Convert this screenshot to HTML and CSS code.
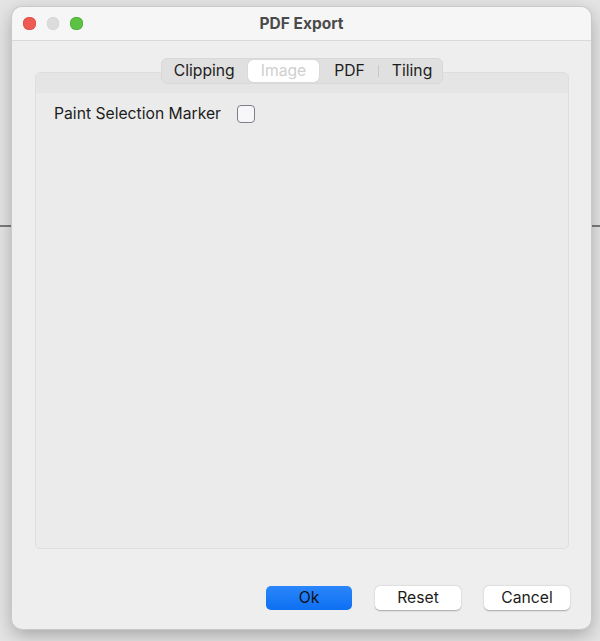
FILE: index.html
```html
<html>
<head>
<meta http-equiv="Content-Type" content="text/html; charset=UTF-8">
<title>PDF Export</title>
<link rel="stylesheet" href="styles.css">
</head>
<body>
<div class="window">
	<div class="titlebar">
		<div class="lights">
			<span class="light red"></span>
			<span class="light gray"></span>
			<span class="light green"></span>
		</div>
		<div class="title">PDF Export</div>
	</div>
	<div class="content">
		<div class="tabs">
			<span class="tab">Clipping</span>
			<span class="tab selected">Image</span>
			<span class="tab sep">PDF</span>
			<span class="tab">Tiling</span>
		</div>
		<div class="panel">
			<div class="panel_head"></div>
			<div class="row">
				<span class="label">Paint Selection Marker</span>
				<span class="check"></span>
			</div>
		</div>
		<div class="buttons">
			<span class="button default">Ok</span>
			<span class="button">Reset</span>
			<span class="button">Cancel</span>
		</div>
	</div>
</div>
</body>
</html>
```

FILE: styles.css
```css
body{
	margin: 0;
	height: 641px;
	overflow: hidden;
	font-family: Inter, "Noto Sans", "Liberation Sans", sans-serif;
	color: #262626;
	background:
		linear-gradient(to bottom, transparent 225px, #7a7a7a 225px, #7a7a7a 227px, transparent 227px),
		#e4e4e4;
}

div.window{
	margin: 7px 9px 0 12px;
	width: 579px;
	height: 622px;
	border-radius: 10px;
	background: #eeeeee;
	box-shadow: 0 0 0 1px #c9c9c9, 0 6px 18px rgba(0,0,0,0.28);
	overflow: hidden;
	display: flex;
	flex-direction: column;
}

div.titlebar{
	height: 33px;
	background: #f6f6f6;
	border-bottom: 1px solid #d9d9d9;
	display: flex;
	align-items: center;
	position: relative;
}
div.lights{
	display: flex;
	gap: 11px;
	padding-left: 11px;
}
span.light{
	width: 12.5px;
	height: 12.5px;
	border-radius: 50%;
}
span.red{background: #ee5a52; box-shadow: inset 0 0 0 0.5px #d8443c}
span.gray{background: #dcdcdc; box-shadow: inset 0 0 0 0.5px #cfcfcf}
span.green{background: #5cc243; box-shadow: inset 0 0 0 0.5px #48a532}
div.title{
	position: absolute;
	left: 0;
	right: 0;
	text-align: center;
	font-size: 15.5px;
	font-weight: 700;
	color: #4a4a4a;
}

div.content{
	flex: 1;
	display: flex;
	flex-direction: column;
	padding: 17px 22px 0 23px;
}

div.tabs{
	align-self: center;
	display: flex;
	align-items: center;
	background: #e0e0e0;
	border: 1px solid #d8d8d8;
	border-radius: 6px;
	padding: 1px;
	margin-bottom: -12px;
	position: relative;
	z-index: 1;
	font-size: 15.7px;
}
span.tab{
	height: 22px;
	line-height: 22px;
	padding: 0 11px;
	color: #1c1c1c;
	border-radius: 5px;
}
span.tab:first-child{padding-left: 11px; padding-right: 13px}
span.selected{
	background: #ffffff;
	color: #cfcfcf;
	box-shadow: 0 0 1px rgba(0,0,0,0.25);
	padding: 0 13px;
}
span.sep{
	padding: 0 13px 0 15px;
	border-right: 1px solid #c8c8c8;
	border-radius: 0;
	height: 12px;
	line-height: 12px;
}
span.tab:last-child{padding: 0 9px 0 13px}

div.panel{
	height: 475px;
	background: #ebebeb;
	border: 1px solid #dedede;
	border-radius: 5px;
	overflow: hidden;
}
div.panel_head{
	height: 20px;
	background: #e5e5e5;
}
div.row{
	display: flex;
	align-items: center;
	padding: 11px 18px;
	gap: 16px;
	font-size: 15.7px;
	color: #1c1c1c;
}
span.check{
	border: 1.5px solid #7b7f8a;
	border-radius: 4px;
	background: #f7f7f9;
	box-sizing: border-box;
	width: 18px;
	height: 18px;
}

div.buttons{
	display: flex;
	justify-content: flex-end;
	gap: 23px;
	margin-top: 37px;
	margin-right: -1px;
}
span.button{
	width: 86px;
	height: 24px;
	line-height: 24px;
	text-align: center;
	font-size: 15.7px;
	background: #ffffff;
	border-radius: 5px;
	box-shadow: 0 0.5px 1.5px rgba(0,0,0,0.3);
	color: #1c1c1c;
}
span.default{
	background: linear-gradient(#2a86fa, #0d6ff2);
	box-shadow: none;
	color: #101010;
}
```
